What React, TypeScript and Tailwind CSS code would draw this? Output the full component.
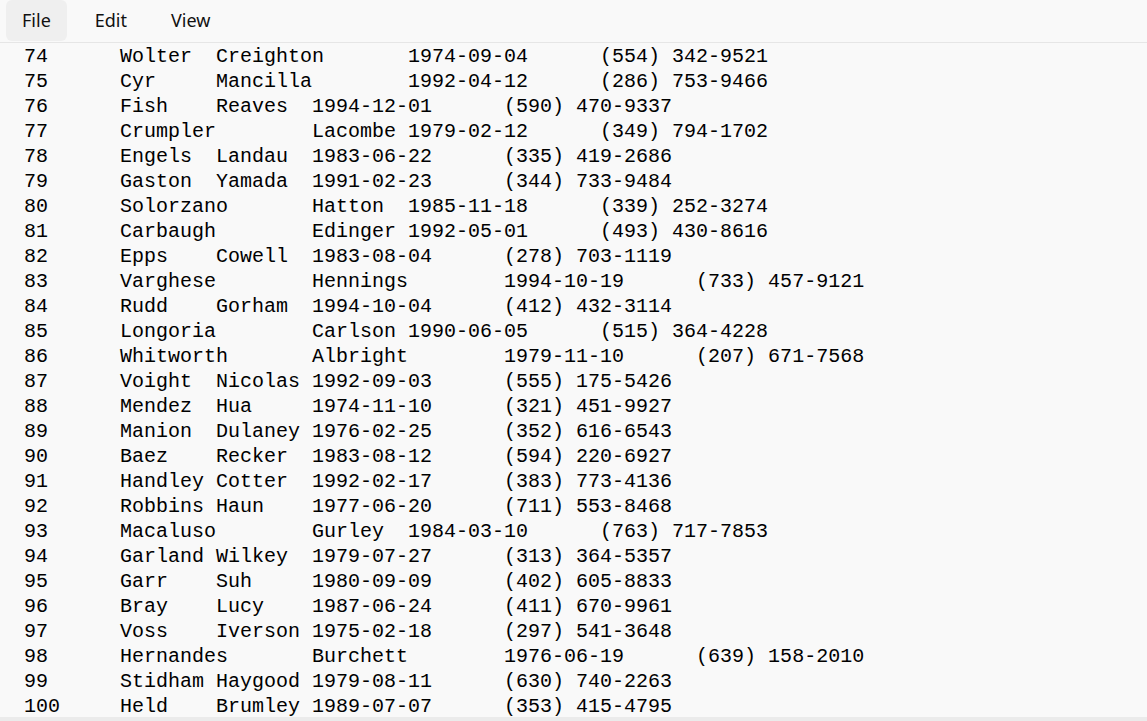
const rows = [
  "74\tWolter\tCreighton\t1974-09-04\t(554) 342-9521",
  "75\tCyr\tMancilla\t1992-04-12\t(286) 753-9466",
  "76\tFish\tReaves\t1994-12-01\t(590) 470-9337",
  "77\tCrumpler\tLacombe\t1979-02-12\t(349) 794-1702",
  "78\tEngels\tLandau\t1983-06-22\t(335) 419-2686",
  "79\tGaston\tYamada\t1991-02-23\t(344) 733-9484",
  "80\tSolorzano\tHatton\t1985-11-18\t(339) 252-3274",
  "81\tCarbaugh\tEdinger\t1992-05-01\t(493) 430-8616",
  "82\tEpps\tCowell\t1983-08-04\t(278) 703-1119",
  "83\tVarghese\tHennings\t1994-10-19\t(733) 457-9121",
  "84\tRudd\tGorham\t1994-10-04\t(412) 432-3114",
  "85\tLongoria\tCarlson\t1990-06-05\t(515) 364-4228",
  "86\tWhitworth\tAlbright\t1979-11-10\t(207) 671-7568",
  "87\tVoight\tNicolas\t1992-09-03\t(555) 175-5426",
  "88\tMendez\tHua\t1974-11-10\t(321) 451-9927",
  "89\tManion\tDulaney\t1976-02-25\t(352) 616-6543",
  "90\tBaez\tRecker\t1983-08-12\t(594) 220-6927",
  "91\tHandley\tCotter\t1992-02-17\t(383) 773-4136",
  "92\tRobbins\tHaun\t1977-06-20\t(711) 553-8468",
  "93\tMacaluso\tGurley\t1984-03-10\t(763) 717-7853",
  "94\tGarland\tWilkey\t1979-07-27\t(313) 364-5357",
  "95\tGarr\tSuh\t1980-09-09\t(402) 605-8833",
  "96\tBray\tLucy\t1987-06-24\t(411) 670-9961",
  "97\tVoss\tIverson\t1975-02-18\t(297) 541-3648",
  "98\tHernandes\tBurchett\t1976-06-19\t(639) 158-2010",
  "99\tStidham\tHaygood\t1979-08-11\t(630) 740-2263",
  "100\tHeld\tBrumley\t1989-07-07\t(353) 415-4795",
];

const menus = ["File", "Edit", "View"];

export default function App() {
  return (
    <div className="w-[1147px] h-[721px] bg-[#f9f9f9] flex flex-col overflow-hidden">
      <div className="h-[42px] flex items-start px-[6px] gap-[12px] shrink-0 font-['Noto_Sans',sans-serif] text-[18px] text-[#111]">
        {menus.map((m, i) => (
          <div
            key={m}
            className={`h-[41px] px-[16px] flex items-center rounded-[6px] ${i === 0 ? "bg-[#efefef]" : ""}`}
          >
            {m}
          </div>
        ))}
      </div>
      <div className="h-[1px] bg-[#e6e6e6] shrink-0" />
      <div className="flex-1 overflow-hidden pl-[24px] pt-[1px] font-['Liberation_Mono',monospace] text-[20px] leading-[25px] text-black whitespace-pre [tab-size:8]">
        {rows.map((r) => (
          <div key={r}>{r}</div>
        ))}
      </div>
      <div className="h-[4px] bg-[#ebebeb] shrink-0" />
    </div>
  );
}
